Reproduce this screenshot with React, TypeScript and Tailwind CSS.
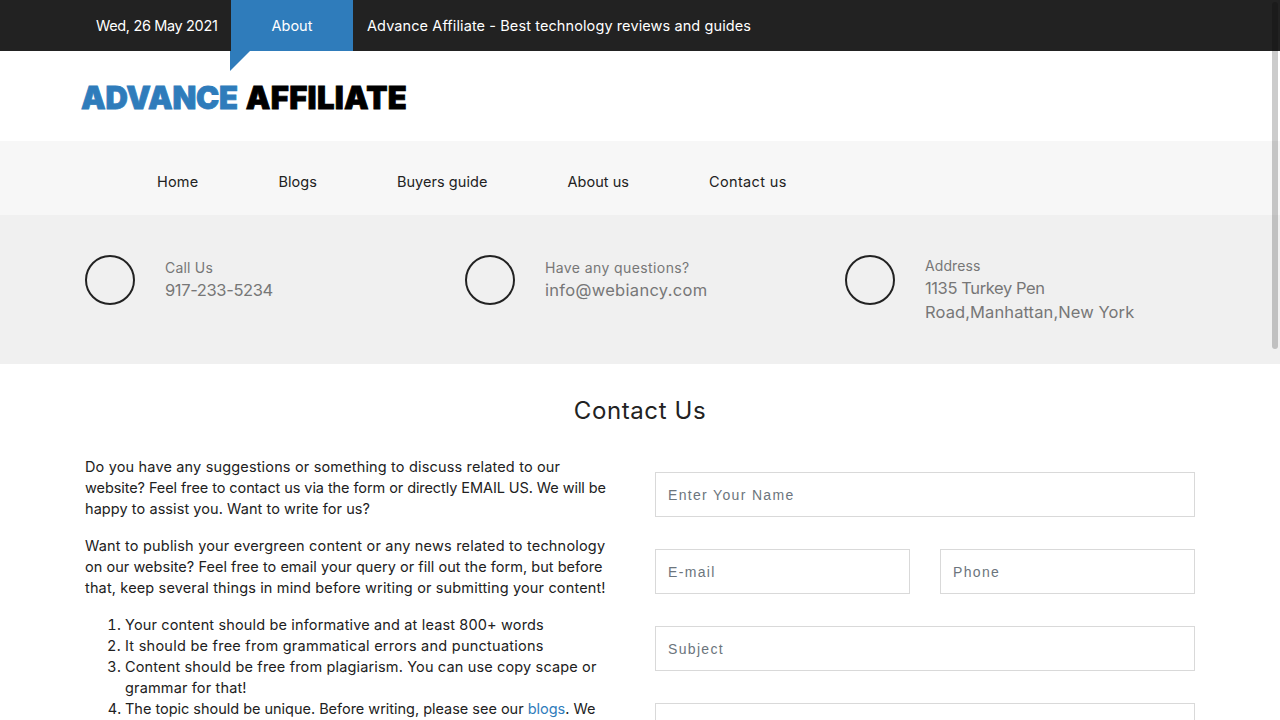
import React from "react";

type Line = { text: string; cls: string };

const navItems: Line[] = [
  { text: "Home", cls: "tracking-[0.2px]" },
  { text: "Blogs", cls: "tracking-[0.05px]" },
  { text: "Buyers guide", cls: "tracking-[0.05px]" },
  { text: "About us", cls: "tracking-[0.05px]" },
  { text: "Contact us", cls: "tracking-[0.35px]" },
];

function InfoBlock({ label, labelCls, lines, top }: { label: string; labelCls: string; lines: Line[]; top: string }) {
  return (
    <div className="flex w-[380px] items-start">
      <div className="h-[50px] w-[50px] shrink-0 rounded-full border-2 border-[#222222]" />
      <div className={`ml-[30px] w-[230px] text-[#777777] ${top}`}>
        <div className={`text-[14px] leading-[21px] ${labelCls}`}>{label}</div>
        {lines.map((l) => (
          <div key={l.text} className={`text-[16.5px] leading-[24px] whitespace-nowrap ${l.cls}`}>{l.text}</div>
        ))}
      </div>
    </div>
  );
}

function Para({ lines, className }: { lines: Line[]; className?: string }) {
  return (
    <p className={className}>
      {lines.map((l) => (
        <span key={l.text} className={`block whitespace-nowrap ${l.cls}`}>{l.text}</span>
      ))}
    </p>
  );
}

function Field({ placeholder, className }: { placeholder: string; className?: string }) {
  return (
    <input
      placeholder={placeholder}
      className={`h-[45px] border border-[#d9d9d9] bg-white px-3 font-[Arial,Helvetica,sans-serif] text-[14px] tracking-[1.33px] placeholder:text-[#6c757d] ${className ?? ""}`}
    />
  );
}

export default function App() {
  return (
    <div className="relative h-screen overflow-hidden bg-white font-['Inter','Open_Sans',sans-serif] text-[#212121]">
      <div className="flex h-[51px] bg-[#222222] pl-[96px] text-[14.5px] text-white">
        <div className="flex w-[135px] items-center tracking-[-0.35px]">Wed, 26 May 2021</div>
        <div className="relative flex w-[122px] items-center justify-center bg-[#2f7cbb]">
          About
          <div className="absolute left-[-1px] top-[51px] h-0 w-0 border-r-[20px] border-t-[20px] border-r-transparent border-t-[#2f7cbb]" />
        </div>
        <div className="ml-[14px] flex items-center tracking-[0.1px]">Advance Affiliate - Best technology reviews and guides</div>
      </div>

      <div className="flex h-[90px] items-center pl-[81px] pt-[4px] text-[31px] font-black [-webkit-text-stroke:0.8px_currentColor]">
        <span className="text-[#2f7cbb] tracking-[-0.2px]">ADVANCE</span>
        <span className="ml-[8px] tracking-[0.3px] text-black">AFFILIATE</span>
      </div>

      <nav className="flex h-[74px] items-center gap-[80px] bg-[#f7f7f7] pl-[157px] pt-[8px] text-[14.5px] text-[#222222]">
        {navItems.map((n) => (
          <span key={n.text} className={n.cls}>{n.text}</span>
        ))}
      </nav>

      <div className="flex h-[149px] bg-[#f0f0f0] pl-[85px] pt-[40px]">
        <InfoBlock label="Call Us" labelCls="tracking-[0.2px]" lines={[{ text: "917-233-5234", cls: "tracking-[-0.37px]" }]} top="pt-[2px]" />
        <InfoBlock label="Have any questions?" labelCls="tracking-[0.4px]" lines={[{ text: "info@webiancy.com", cls: "tracking-[0.3px]" }]} top="pt-[2px]" />
        <InfoBlock
          label="Address"
          labelCls="tracking-[0.1px]"
          lines={[
            { text: "1135 Turkey Pen", cls: "tracking-[-0.4px]" },
            { text: "Road,Manhattan,New York", cls: "tracking-[0.1px]" },
          ]}
          top=""
        />
      </div>

      <h1 className="pt-[30px] text-center text-[24px] leading-[34px] tracking-[0.6px] text-[#222222]">Contact Us</h1>

      <div className="flex pl-[85px] pt-[28px]">
        <div className="w-[525px] shrink-0 text-[14.5px] leading-[21px]">
          <Para
            lines={[
              { text: "Do you have any suggestions or something to discuss related to our", cls: "tracking-[0.16px]" },
              { text: "website? Feel free to contact us via the form or directly EMAIL US. We will be", cls: "tracking-[-0.08px]" },
              { text: "happy to assist you. Want to write for us?", cls: "tracking-[0.07px]" },
            ]}
          />
          <Para
            className="mt-[16px]"
            lines={[
              { text: "Want to publish your evergreen content or any news related to technology", cls: "tracking-[0.19px]" },
              { text: "on our website? Feel free to email your query or fill out the form, but before", cls: "tracking-[0.04px]" },
              { text: "that, keep several things in mind before writing or submitting your content!", cls: "tracking-[0.15px]" },
            ]}
          />
          <ol className="mt-[16px] list-decimal pl-[40px] tracking-[0.15px]">
            <li>Your content should be informative and at least 800+ words</li>
            <li className="tracking-[0.25px]">It should be free from grammatical errors and punctuations</li>
            <li>Content should be free from plagiarism. You can use copy scape or grammar for that!</li>
            <li className="tracking-[-0.02px]">The topic should be unique. Before writing, please see our <span className="text-[#2f7cbb]">blogs</span>. We</li>
          </ol>
        </div>
        <div className="ml-[45px] flex w-[540px] flex-col gap-[32px] pt-[16px]">
          <Field placeholder="Enter Your Name" className="w-full" />
          <div className="flex gap-[30px]">
            <Field placeholder="E-mail" className="w-[255px]" />
            <Field placeholder="Phone" className="w-[255px]" />
          </div>
          <Field placeholder="Subject" className="w-full" />
          <textarea className="h-[120px] w-full border border-[#d9d9d9]" />
        </div>
      </div>

      {/* overlay scrollbar */}
      <div className="absolute right-[2px] top-[2px] h-[347px] w-[6px] rounded-full bg-[rgba(0,0,0,0.2)]" />
    </div>
  );
}
